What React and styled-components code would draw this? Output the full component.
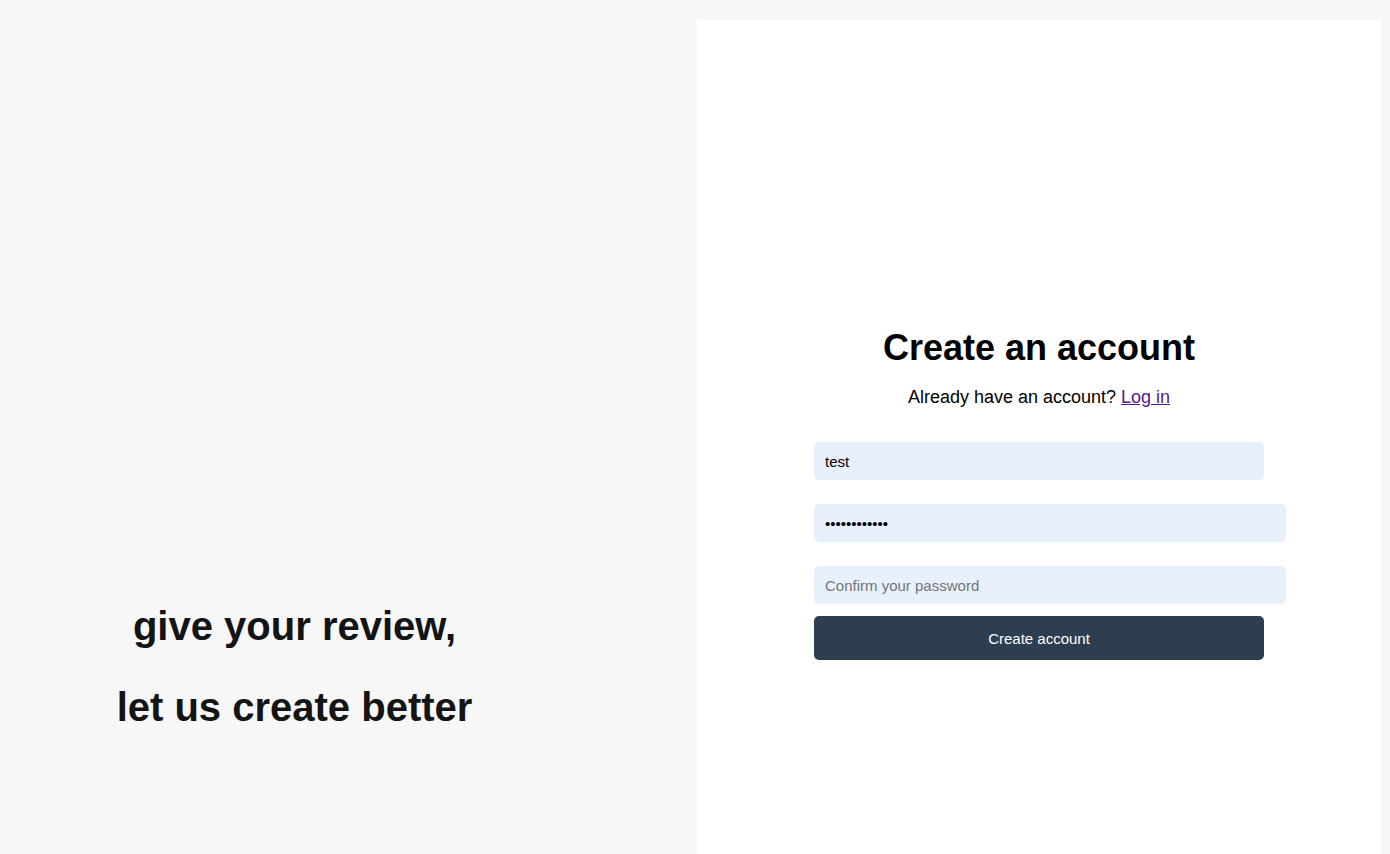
import React from 'react'
import styled, { createGlobalStyle } from 'styled-components'

const GlobalStyle = createGlobalStyle`
  html, body {
    margin: 0;
    padding: 0;
    background: #f7f7f7;
    font-family: "Liberation Sans", Arial, sans-serif;
    overflow: hidden;
  }
`

function App() {
    return (
        <>
            <GlobalStyle />
            <Page>
                <Intro>
                    <Tagline>
                        give your review,
                        <br />
                        let us create better
                    </Tagline>
                </Intro>
                <Panel>
                    <Title>Create an account</Title>
                    <Subtitle>
                        Already have an account? <LoginLink href="#login">Log in</LoginLink>
                    </Subtitle>
                    <Form onSubmit={e => e.preventDefault()}>
                        <Field type="text" defaultValue="test" />
                        <Field type="password" defaultValue="password1234" wide />
                        <Field type="password" placeholder="Confirm your password" wide />
                        <SubmitButton type="submit">Create account</SubmitButton>
                    </Form>
                </Panel>
            </Page>
        </>
    )
}

export default App

const Page = styled.div`
  display: flex;
  height: 100vh;
  background: #f7f7f7;
`

const Intro = styled.div`
  flex: 0 0 589px;
  margin-right: 108px;
  display: flex;
  flex-direction: column;
  justify-content: flex-end;
  align-items: center;
  padding-bottom: 106px;
`

const Tagline = styled.h2`
  margin: 0;
  font-size: 40px;
  line-height: 81px;
  font-weight: 700;
  color: #141414;
  text-align: center;
`

const Panel = styled.div`
  flex: 0 0 684px;
  margin-top: 20px;
  height: calc(100vh - 20px);
  background: #ffffff;
  display: flex;
  flex-direction: column;
  align-items: center;
  padding-top: 307px;
  box-sizing: border-box;
`

const Title = styled.h1`
  margin: 0;
  font-size: 36px;
  line-height: 42px;
  font-weight: 700;
  color: #000;
`

const Subtitle = styled.p`
  margin: 18px 0 0;
  font-size: 18px;
  line-height: 21px;
  color: #000;
`

const LoginLink = styled.a`
  color: #551a8b;
  text-decoration: underline;
`

const Form = styled.form`
  width: 450px;
  margin-top: 34px;
  display: flex;
  flex-direction: column;
`

const Field = styled.input`
  box-sizing: border-box;
  width: ${p => (p.wide ? '472px' : '100%')};
  height: 38px;
  margin-bottom: 24px;
  padding: 0 11px;
  border: none;
  border-radius: 5px;
  background: #e8f0fe;
  font-family: "Liberation Sans", Arial, sans-serif;
  font-size: 15px;
  color: #000;
  outline: none;

  &:last-of-type {
    margin-bottom: 12px;
  }

  &::placeholder {
    color: #757575;
  }
`

const SubmitButton = styled.button`
  height: 44px;
  border: none;
  border-radius: 5px;
  background: #2c3e50;
  color: #ffffff;
  font-family: "Liberation Sans", Arial, sans-serif;
  font-size: 15px;
  cursor: pointer;
`
